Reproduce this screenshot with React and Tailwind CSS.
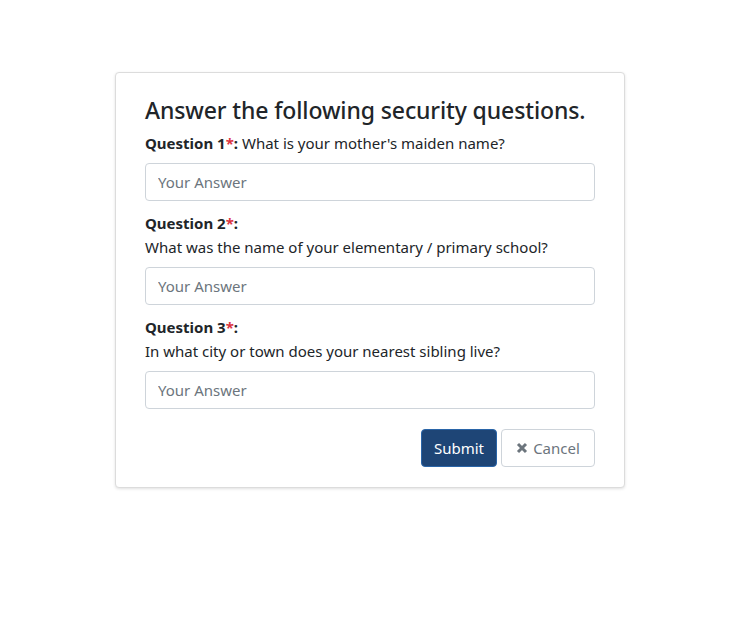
import React, { useState } from 'react';

const questions = [
  { label: 'Question 1', text: "What is your mother's maiden name?", inline: true },
  { label: 'Question 2', text: 'What was the name of your elementary / primary school?' },
  { label: 'Question 3', text: 'In what city or town does your nearest sibling live?' },
];

export default function App() {
  const [answers, setAnswers] = useState(['', '', '']);

  const setAnswer = (i, v) => {
    const next = [...answers];
    next[i] = v;
    setAnswers(next);
  };

  return (
    <div
      className="min-h-screen bg-white pt-[72px] pl-[115px] text-[#212529]"
      style={{ fontFamily: '"Noto Sans", "Open Sans", sans-serif' }}
    >
      <div className="w-[510px] rounded-[4px] border border-[#dcdcdc] bg-white px-[29px] pt-[22px] pb-[20px] shadow-[0_1px_3px_rgba(0,0,0,0.12)]">
        <h3 className="mb-[6px] text-[23px] font-medium leading-[30px] tracking-[-0.12px]">
          Answer the following security questions.
        </h3>

        {questions.map((q, i) => (
          <div key={q.label} className={i > 0 ? 'mt-[10px]' : ''}>
            <div className="text-[15px] leading-[24px]">
              <span className="font-bold">
                {q.label}
                <span className="text-[#dc3545]">*</span>:
              </span>
              {q.inline ? <span> {q.text}</span> : <div>{q.text}</div>}
            </div>
            <input
              type="text"
              value={answers[i]}
              onChange={(e) => setAnswer(i, e.target.value)}
              placeholder="Your Answer"
              className="mt-[8px] block h-[38px] w-full rounded-[4px] border border-[#ced4da] px-[12px] text-[15px] text-[#495057] placeholder:text-[#6c757d] focus:outline-none"
            />
          </div>
        ))}

        <div className="mt-[20px] flex justify-end gap-[4px]">
          <button
            type="button"
            className="h-[38px] w-[76px] rounded-[4px] border border-[#2a65a8] bg-[#1e4576] text-[15px] text-white"
          >
            Submit
          </button>
          <button
            type="button"
            className="flex h-[38px] w-[94px] items-center justify-center gap-[5px] rounded-[4px] border border-[#ced4da] bg-white text-[15px] text-[#6c757d]"
          >
            <svg width="12" height="12" viewBox="0 0 12 12" aria-hidden="true">
              <path d="M2 2 L10 10 M10 2 L2 10" stroke="#6c757d" strokeWidth="3" />
            </svg>
            Cancel
          </button>
        </div>
      </div>
    </div>
  );
}
